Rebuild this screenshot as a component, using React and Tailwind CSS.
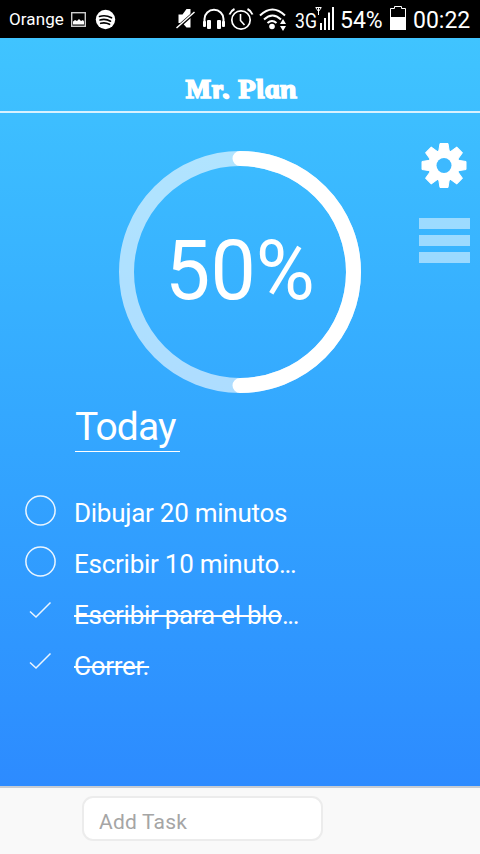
const TASKS = [
  { text: 'Dibujar 20 minutos', suffix: '', done: false },
  { text: 'Escribir 10 minuto', suffix: '...', done: false },
  { text: 'Escribir para el blo', suffix: '...', done: true },
  { text: 'Correr.', suffix: '', done: true },
];

function StatusIcons() {
  return (
    <svg width="112" height="38" viewBox="175 0 112 38" fill="none" stroke="#fff" className="shrink-0">
      {/* muted speaker */}
      <path d="M178.500 14.500h4l4-5.500h4v18.500h-4l-4-4.500h-4z" fill="#fff" stroke="none" />
      <path d="M176.500 28.500L195 12" stroke="#000" strokeWidth="3.400" />
      <path d="M176.500 28L194.500 12" strokeWidth="1.500" />
      {/* headphones */}
      <path d="M204.500 24v-5a9.300 9 0 0 1 19 0v5" strokeWidth="2" />
      <rect x="203" y="21" width="3" height="6" rx="1" fill="#fff" stroke="none" />
      <rect x="222" y="21" width="3" height="6" rx="1" fill="#fff" stroke="none" />
      <rect x="207" y="20" width="4" height="9" rx="1" fill="#fff" stroke="none" />
      <rect x="217" y="20" width="4" height="9" rx="1" fill="#fff" stroke="none" />
      {/* alarm */}
      <circle cx="241" cy="20" r="9.200" strokeWidth="1.700" />
      <path d="M240.500 14v6.500l4 4.500" strokeWidth="1.600" />
      <path d="M229.500 14.500a10 10 0 0 1 5-5.500M252.500 14.500a10 10 0 0 0-5-5.500" strokeWidth="2" />
      {/* wifi */}
      <path d="M260 15.500q12.500-12 25 0M264 19.500q8.500-8 17 0M267.500 23q4.500-4 9 0" strokeWidth="2" />
      <circle cx="272" cy="26.500" r="2.800" fill="#fff" stroke="none" />
      <path d="M280 24l3-5 3 5zM280 26h6l-3 5z" fill="#fff" stroke="none" />
    </svg>
  );
}

function StatusBar() {
  return (
    <header className="flex h-[38px] items-center bg-black pl-[9px] text-white">
      <span className="w-[62px] text-[17px] leading-[38px] tracking-[0.1px]">Orange</span>
      <svg width="45" height="38" viewBox="71 0 45 38" className="shrink-0">
        <rect x="71.700" y="12.700" width="13.600" height="13.600" fill="none" stroke="#ccc" strokeWidth="1.400" />
        <path d="M73 24.500v-3l2-1.500 2 1 2-2 2 2 2-1 1 1.500v3z" fill="#fff" />
        <circle cx="105.500" cy="19.500" r="9.700" fill="#fff" />
        <path d="M99.500 16.500q6-2 12 1.300M100 20q5.500-1.600 10.500 1.200M100.700 23.300q4.500-1.300 8.800 1" fill="none" stroke="#000" strokeWidth="1.700" strokeLinecap="round" />
      </svg>
      <div className="ml-[59px]">
        <StatusIcons />
      </div>
      <span className="ml-2 w-[14px] origin-left scale-x-[0.84] pt-[4px] text-[21px] leading-[38px] whitespace-nowrap">3G</span>
      <svg width="27" height="38" viewBox="309 0 27 38" fill="#fff" className="shrink-0">
        <path d="M315.500 7.500h6M316 8l2.500 3.500 2.500-3.500M318.500 8v7" fill="none" stroke="#fff" />
        <path d="M320 23h2v7h-2zM324 18h2v12h-2zM328 12.500h2v17.500h-2zM332 7h2v23h-2z" />
      </svg>
      <span className="ml-[4px] w-[50px] pt-[3px] text-[23px] leading-[40px]">54%</span>
      <svg width="16" height="38" viewBox="390 0 16 38" className="shrink-0">
        <path d="M390.500 29.500v-21h4v-2h7v2h4v21z" fill="none" stroke="#fff" />
        <path d="M390 17h16v13h-16z" fill="#fff" />
      </svg>
      <span className="ml-[7px] pt-[3px] text-[23px] leading-[40px]">00:22</span>
    </header>
  );
}

function ProgressRing({ percent }) {
  return (
    <div className="grid h-[242px] w-[242px] place-items-center">
      <svg viewBox="0 0 242 242" fill="none" stroke="#fff" strokeWidth="15" className="col-start-1 row-start-1 h-full w-full">
        <circle cx="121" cy="121" r="113.500" strokeOpacity=".6" />
        <circle
          cx="121"
          cy="121"
          r="113.500"
          pathLength="100"
          strokeDasharray={`${percent} 100`}
          strokeLinecap="round"
          transform="rotate(-90 121 121)"
        />
      </svg>
      <span className="col-start-1 row-start-1 scale-x-[0.96] pb-[2px] text-[84px] leading-none">{percent}%</span>
    </div>
  );
}

function Task({ text, suffix, done }) {
  return (
    <li className="flex h-[51px] items-start">
      <svg width="32" height="32" viewBox="0.500 0.500 32 32" fill="none" stroke="#fff" strokeWidth="1.500" strokeOpacity=".9" className="shrink-0">
        {done ? <path d="M5.500 15l6 5.500L26 6" /> : <circle cx="16" cy="16" r="14.600" />}
      </svg>
      <span className="ml-[17px] text-[26px] leading-[36px] tracking-[-0.26px] whitespace-nowrap">
        <span className={done ? 'line-through decoration-[1.500px]' : ''}>{text}</span>
        <span className="tracking-[-1.400px]">{suffix}</span>
      </span>
    </li>
  );
}

export default function App() {
  return (
    <div className="flex h-[854px] w-[480px] flex-col overflow-hidden font-['Roboto',sans-serif]">
      <StatusBar />
      <main className="flex-1 bg-linear-to-b from-[#40c4ff] to-[#2d8bff] text-white">
        <h1 className="flex h-[75px] items-end justify-center border-b-2 border-white/80 pb-[6px] font-['Liberation_Serif',serif] text-[27px] leading-[32px] font-bold italic">
          <span className="ml-px scale-x-[1.1] skew-x-[11deg] tracking-[0.3px] [-webkit-text-stroke:1.500px_white]">Mr. Plan</span>
        </h1>
        <div className="flex pt-[38px] pl-[119px]">
          <ProgressRing percent={50} />
          <nav className="-mt-[10px] ml-[58px] flex flex-col items-center">
            <svg width="48" height="48" viewBox="-23 -24.500 48 48">
              <g fill="#fff" stroke="#fff" strokeLinejoin="round">
                {[0, 45, 90, 135].map((angle) => (
                  <path key={angle} d="M-4-22h8l1.200 7.500v29l-1.200 7.500h-8l-1.200-7.500v-29z" transform={`rotate(${angle})`} />
                ))}
                <circle r="15.500" />
              </g>
              <circle r="7.500" fill="#3db9ff" />
            </svg>
            <div className="mt-[29px] flex flex-col gap-[6px]">
              <span className="h-[11px] w-[51px] bg-white/50" />
              <span className="h-[11px] w-[51px] bg-white/50" />
              <span className="h-[11px] w-[51px] bg-white/50" />
            </div>
          </nav>
        </div>
        <h2 className="mt-[9px] ml-[75px] h-[50px] w-[105px] border-b-[1.500px] border-white text-[39px] leading-[50px] tracking-[-0.9px]">Today</h2>
        <ul className="mt-[43px] ml-[25px]">
          {TASKS.map((task) => (
            <Task key={task.text} {...task} />
          ))}
        </ul>
      </main>
      <footer className="flex h-[68px] border-t-2 border-[#c5ccd4] bg-[#f9f9f9] pt-[8px] pl-[82px]">
        <input
          placeholder="Add Task"
          className="h-[45px] w-[241px] rounded-[11px] border-2 border-[#ececec] bg-white px-[15px] pt-[6px] text-[21px] tracking-[0.2px] placeholder:text-[#a5a5a5]"
        />
      </footer>
    </div>
  );
}
